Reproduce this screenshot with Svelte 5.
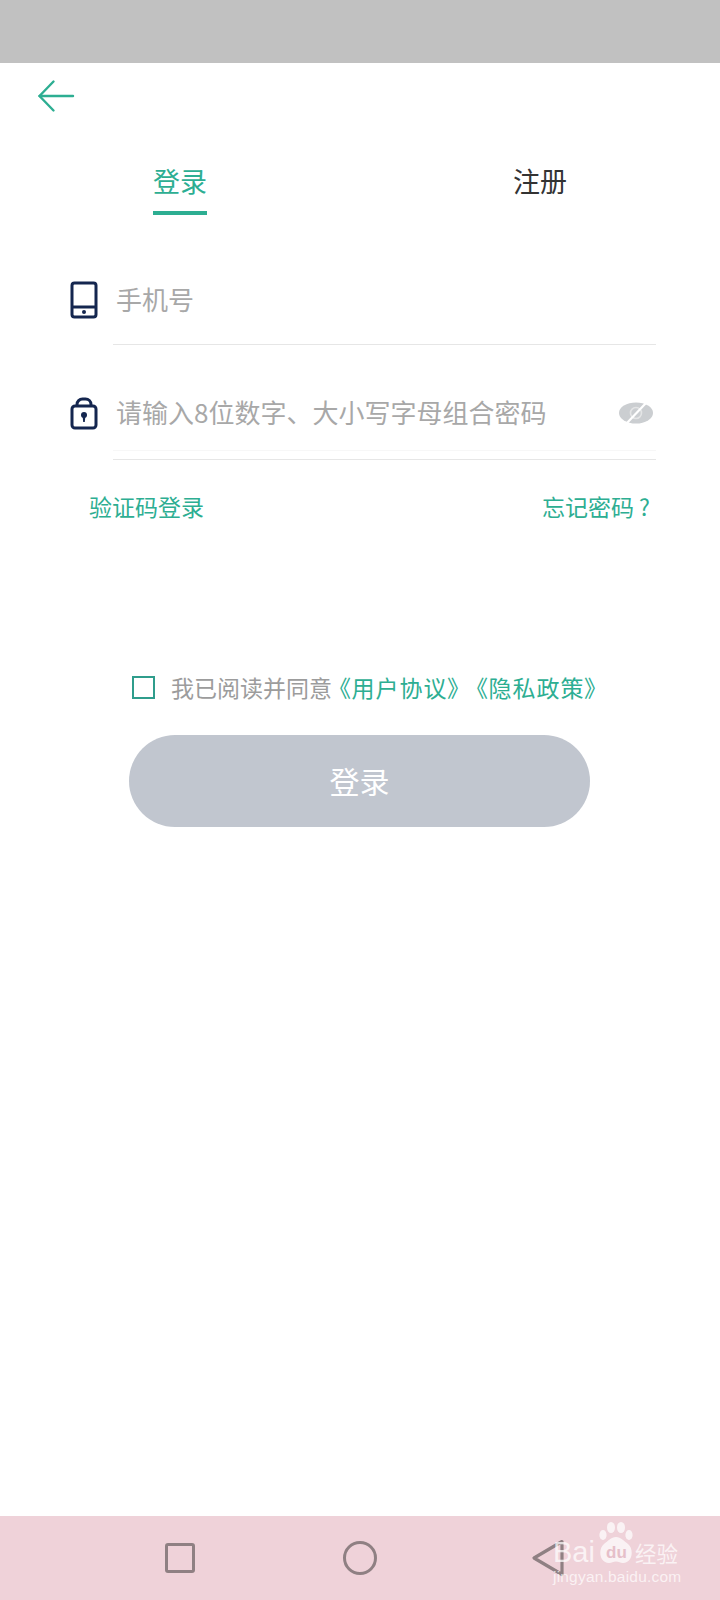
<script lang="ts">
	let agreed = $state(false);
	let phone = $state('');
	let password = $state('');
</script>

<div class="page">
	<div class="status-bar"></div>

	<header class="top">
		<button class="back" aria-label="返回">
			<svg width="38" height="34" viewBox="0 0 38 34" fill="none" stroke="#2dae92" stroke-width="2.4" stroke-linecap="round" stroke-linejoin="round">
				<path d="M36 17H2.5" />
				<path d="M16.5 2.5 2.5 17l14 14.5" />
			</svg>
		</button>
	</header>

	<nav class="tabs">
		<div class="tab active"><span>登录</span></div>
		<div class="tab"><span>注册</span></div>
	</nav>

	<form class="form" onsubmit={(e) => e.preventDefault()}>
		<div class="row phone-row">
			<svg class="row-icon" width="28" height="38" viewBox="0 0 28 38" fill="none" stroke="#14264f" stroke-width="3">
				<rect x="2" y="2" width="24" height="34" rx="2.5" />
				<path d="M2 26h24" />
				<circle cx="14" cy="31" r="2" fill="#14264f" stroke="none" />
			</svg>
			<div class="field">
				<input bind:value={phone} placeholder="手机号" />
			</div>
		</div>

		<div class="row pwd-row">
			<svg class="row-icon" width="28" height="33" viewBox="0 0 28 33" fill="none" stroke="#14264f" stroke-width="3">
				<path d="M7 9V7.5a5.5 5.5 0 0 1 5.5-5.5h3A5.5 5.5 0 0 1 21 7.5V9" />
				<rect x="2" y="9" width="24" height="22" rx="3" />
				<circle cx="14" cy="18" r="3" fill="#14264f" stroke="none" />
				<path d="M12.6 19h2.8l-.6 6h-1.600Z" fill="#14264f" stroke="none" />
			</svg>
			<div class="field pwd-field">
				<div class="pwd-inner">
					<input type="text" bind:value={password} placeholder="请输入8位数字、大小写字母组合密码" />
					<svg class="eye" width="34" height="22" viewBox="0 0 34 22">
						<ellipse cx="17" cy="11" rx="17" ry="10.500" fill="#cbced1" />
						<circle cx="17" cy="11" r="5.500" fill="none" stroke="#e4e5e6" stroke-width="1.600" />
						<path d="M7 22 27 1" stroke="#fff" stroke-width="2.200" />
					</svg>
				</div>
			</div>
		</div>

		<div class="links">
			<a href="#code">验证码登录</a>
			<a href="#forgot">忘记密码 ?</a>
		</div>

		<label class="agree">
			<input type="checkbox" bind:checked={agreed} />
			<span class="gray">我已阅读并同意</span>
			<span class="green first">《用户协议》</span>
			<span class="green">《隐私政策》</span>
		</label>

		<button class="submit" type="submit">登录</button>
	</form>

	<div class="nav-bar">
		<span class="nav-square"></span>
		<span class="nav-circle"></span>
		<svg class="nav-back" width="34" height="38" viewBox="0 0 34 38" fill="none" stroke="#8f8083" stroke-width="3.200" stroke-linejoin="round">
			<path d="M31 2.500 3 19l28 16.500Z" />
		</svg>
	</div>

	<div class="watermark" aria-hidden="true">
		<svg class="paw" width="34" height="42" viewBox="0 0 34 42" fill="#fff" opacity="0.72">
			<ellipse cx="4" cy="13" rx="3.600" ry="5" />
			<ellipse cx="12" cy="5.500" rx="4" ry="5.500" />
			<ellipse cx="22" cy="5.500" rx="4" ry="5.500" />
			<ellipse cx="30" cy="13" rx="3.600" ry="5" />
			<path d="M17 15c5 0 8 4 12 7 6 4.500 5 19-5 19-3 0-4-1.500-7-1.500s-4 1.500-7 1.500c-10 0-11-14.500-5-19 4-3 7-7 12-7Z" />
		</svg>
		<span class="wm-bai">Bai</span>
		<span class="wm-du">du</span>
		<span class="wm-cn">经验</span>
		<span class="wm-url">jingyan.baidu.com</span>
	</div>
</div>

<style>
	:global(body) {
		margin: 0;
		background: #fff;
	}

	.page {
		position: relative;
		width: 720px;
		height: 1600px;
		display: flex;
		flex-direction: column;
		background: #fff;
		overflow: hidden;
		font-family: 'Noto Sans CJK SC', 'Noto Sans', sans-serif;
	}

	.status-bar {
		height: 63px;
		background: #c1c1c1;
		flex-shrink: 0;
	}

	.top {
		height: 66px;
		padding: 16px 0 0 37px;
		box-sizing: border-box;
	}

	.back {
		display: block;
		padding: 0;
		border: none;
		background: none;
		line-height: 0;
	}

	.tabs {
		display: grid;
		grid-template-columns: 1fr 1fr;
		height: 86px;
	}

	.tab {
		display: flex;
		justify-content: center;
		font-size: 27px;
		line-height: 40px;
		color: #333;
		padding-top: 32px;
	}

	.tab span {
		display: block;
		height: 54px;
		box-sizing: border-box;
	}

	.tab.active {
		color: #2dae92;
	}

	.tab.active span {
		border-bottom: 4px solid #2dae92;
	}

	.form {
		display: flex;
		flex-direction: column;
		flex: 1;
	}

	.row {
		display: flex;
		align-items: flex-start;
		padding: 0 64px 0 70px;
	}

	.phone-row {
		margin-top: 65px;
	}

	.pwd-row {
		margin-top: 48px;
	}

	.row-icon {
		flex-shrink: 0;
		margin: 1px 15px 0 0;
	}

	.pwd-row .row-icon {
		margin-top: 4px;
	}

	.field {
		flex: 1;
		border-bottom: 1px solid #e6e6e6;
		padding-bottom: 24px;
	}

	.pwd-field {
		padding-bottom: 8px;
	}

	.pwd-inner {
		display: flex;
		align-items: center;
		padding-bottom: 17px;
		padding-right: 3px;
		border-bottom: 1px solid #f7f7f7;
	}

	.field input {
		display: block;
		width: 100%;
		min-width: 0;
		height: 40px;
		box-sizing: border-box;
		border: none;
		outline: none;
		padding: 0 0 4px 3px;
		font: inherit;
		font-size: 26px;
		color: #333;
		background: none;
	}

	.field input::placeholder {
		color: #a8a8a8;
		opacity: 1;
	}

	.eye {
		flex-shrink: 0;
	}

	.links {
		display: flex;
		justify-content: space-between;
		margin-top: 29px;
		padding: 0 70px 0 89px;
		font-size: 23px;
		line-height: 34px;
	}

	.links a {
		color: #2dae92;
		text-decoration: none;
	}

	.agree {
		display: flex;
		align-items: center;
		margin-top: 147px;
		padding-left: 132px;
		font-size: 23px;
		line-height: 34px;
	}

	.agree input {
		appearance: none;
		width: 23px;
		height: 23px;
		margin: 0 16px 0 0;
		border: 2.5px solid #2f9d8c;
		box-sizing: border-box;
		background: #fff;
	}

	.gray {
		color: #9c9c9c;
	}

	.green {
		color: #2dae92;
		font-feature-settings: 'palt';
		letter-spacing: 1px;
		margin-left: 16px;
	}

	.green.first {
		margin-left: 7px;
	}

	.submit {
		align-self: flex-start;
		margin: 31px 0 0 129px;
		padding: 0 0 2px;
		width: 461px;
		height: 92px;
		border: none;
		border-radius: 46px;
		background: #c1c6cf;
		color: #fff;
		font: inherit;
		font-size: 30px;
	}

	.nav-bar {
		height: 84px;
		flex-shrink: 0;
		background: #efd2d9;
		display: flex;
		align-items: center;
		padding-left: 165px;
		gap: 148px;
		box-sizing: border-box;
	}

	.nav-square {
		width: 30px;
		height: 30px;
		border: 3.2px solid #8f8083;
		border-radius: 3px;
		box-sizing: border-box;
	}

	.nav-circle {
		width: 34px;
		height: 34px;
		border: 3.2px solid #8f8083;
		border-radius: 50%;
		box-sizing: border-box;
	}

	.nav-back {
		margin-left: 6px;
	}

	.watermark {
		position: absolute;
		left: 553px;
		top: 1522px;
		width: 130px;
		height: 62px;
		color: rgba(255, 255, 255, 0.72);
	}

	.paw {
		position: absolute;
		left: 46px;
		top: 0;
	}

	.wm-bai,
	.wm-du,
	.wm-cn,
	.wm-url {
		position: absolute;
		white-space: nowrap;
	}

	.wm-bai {
		left: 0;
		top: 14px;
		font-family: 'Liberation Sans', sans-serif;
		font-size: 29px;
		line-height: 32px;
	}

	.wm-du {
		left: 53px;
		top: 22px;
		font-family: 'Liberation Sans', sans-serif;
		font-weight: 700;
		font-size: 17px;
		line-height: 18px;
		color: #e6bfc9;
	}

	.wm-cn {
		left: 82px;
		top: 18px;
		font-size: 21.5px;
		line-height: 26px;
	}

	.wm-url {
		left: 0;
		top: 46px;
		font-family: 'Liberation Sans', sans-serif;
		font-size: 15.5px;
		line-height: 18px;
		letter-spacing: 0.2px;
	}
</style>
